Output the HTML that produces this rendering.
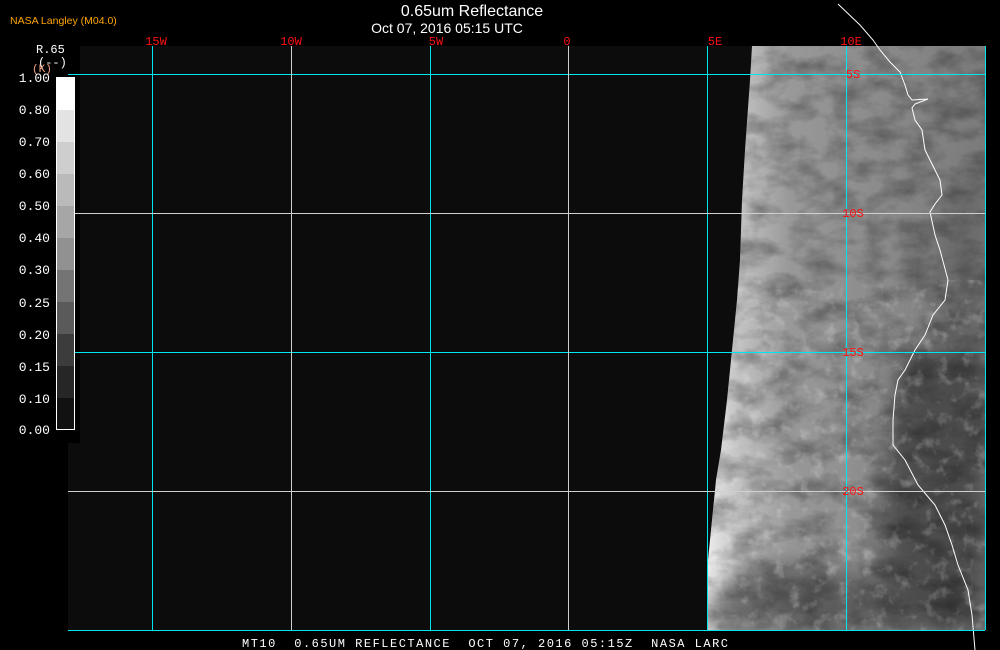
<!DOCTYPE html>
<html><head><meta charset="utf-8"><style>
html,body{margin:0;padding:0;background:#000;width:1000px;height:650px;overflow:hidden}
svg{display:block}
</style></head><body>
<svg width="1000" height="650" viewBox="0 0 1000 650" xmlns="http://www.w3.org/2000/svg">
<defs>
<filter id="noise" x="0" y="0" width="100%" height="100%">
<feTurbulence type="fractalNoise" baseFrequency="0.03 0.05" numOctaves="4" seed="7"/>
<feColorMatrix type="matrix" values="0 0 0 0 0  0 0 0 0 0  0 0 0 0 0  0 0 0 -1.6 1.0"/>
</filter>
<filter id="noise2" x="0" y="0" width="100%" height="100%">
<feTurbulence type="fractalNoise" baseFrequency="0.08" numOctaves="3" seed="3"/>
<feColorMatrix type="matrix" values="0 0 0 0 1  0 0 0 0 1  0 0 0 0 1  0 0 0 -2.4 1.1"/>
</filter>
<filter id="blur"><feGaussianBlur stdDeviation="12"/></filter>
<linearGradient id="edge" x1="0" x2="1" y1="0" y2="0">
<stop offset="0" stop-color="#f0f0f0"/>
<stop offset="0.1" stop-color="#c8c8c8"/>
<stop offset="0.3" stop-color="#999"/>
<stop offset="0.6" stop-color="#8c8c8c"/>
<stop offset="1" stop-color="#7a7a7a"/>
</linearGradient>
<clipPath id="cl"><polygon points="752,46 750,80 745,150 742,200 740,260 737,300 733,340 727,400 721,450 716,480 712,520 708,560 708,630 985,630 985,46"/></clipPath>
</defs>
<rect width="1000" height="650" fill="#000"/>
<rect x="80" y="46" width="905" height="584" fill="#0c0c0c"/>
<rect x="68" y="443" width="20" height="187" fill="#0c0c0c"/>
<g clip-path="url(#cl)">
<rect x="705" y="46" width="280" height="584" fill="url(#edge)"/>
<g filter="url(#blur)">
<polygon points="900,360 985,330 985,630 900,630 880,520" fill="#3e3e3e" opacity="0.8"/>
<polygon points="760,560 900,580 985,610 985,630 708,630 708,600" fill="#4a4a4a" opacity="0.7"/>
<polygon points="940,200 985,180 985,330 930,330" fill="#5a5a5a" opacity="0.6"/>
</g>
<rect x="705" y="46" width="280" height="584" filter="url(#noise)" opacity="0.4"/>
<rect x="705" y="280" width="280" height="350" filter="url(#noise2)" opacity="0.3"/>
</g>
<polyline fill="none" stroke="#fff" stroke-width="1" points="838,4 860,25 873,40 880,50 890,62 900,72 905,85 908,95 912,100 928,99 915,104 912,108 915,120 922,130 925,150 935,170 940,180 942,195 935,204 930,212 935,235 940,250 948,280 945,300 933,315 925,335 915,350 905,370 898,380 895,395 893,420 893,445 905,460 918,485 935,505 945,525 952,545 958,565 968,590 972,615 975,650"/>
<g stroke="#00e5ee" stroke-width="1" shape-rendering="crispEdges">
<line x1="68" y1="74.5" x2="985" y2="74.5"/>
<line x1="68" y1="352.5" x2="985" y2="352.5"/>
<line x1="68" y1="630.5" x2="985" y2="630.5"/>
<line x1="152.5" y1="46" x2="152.5" y2="630"/>
<line x1="430.5" y1="46" x2="430.5" y2="630"/>
<line x1="707.5" y1="46" x2="707.5" y2="630"/>
<line x1="846.5" y1="46" x2="846.5" y2="630"/>
<line x1="985.5" y1="46" x2="985.5" y2="630"/>
</g>
<g stroke="#cfcfcf" stroke-width="1" shape-rendering="crispEdges">
<line x1="68" y1="213.5" x2="985" y2="213.5"/>
<line x1="68" y1="491.5" x2="985" y2="491.5"/>
<line x1="291.5" y1="46" x2="291.5" y2="630"/>
<line x1="568.5" y1="46" x2="568.5" y2="630"/>
</g>
<g shape-rendering="crispEdges">
<rect x="56" y="77" width="19" height="33" fill="#fff"/>
<rect x="56" y="110" width="19" height="32" fill="#e3e3e3"/>
<rect x="56" y="142" width="19" height="32" fill="#cecece"/>
<rect x="56" y="174" width="19" height="32" fill="#bababa"/>
<rect x="56" y="206" width="19" height="32" fill="#a6a6a6"/>
<rect x="56" y="238" width="19" height="32" fill="#919191"/>
<rect x="56" y="270" width="19" height="32" fill="#747474"/>
<rect x="56" y="302" width="19" height="32" fill="#5a5a5a"/>
<rect x="56" y="334" width="19" height="32" fill="#3c3c3c"/>
<rect x="56" y="366" width="19" height="32" fill="#262626"/>
<rect x="56" y="398" width="19" height="32" fill="#111"/>
<rect x="56.5" y="77.5" width="18" height="352" fill="none" stroke="#fff" stroke-width="1"/>
</g>
<g font-family="Liberation Mono, monospace" font-size="13" fill="#fff" text-anchor="end">
<text x="50" y="82">1.00</text>
<text x="50" y="114">0.80</text>
<text x="50" y="146">0.70</text>
<text x="50" y="178">0.60</text>
<text x="50" y="210">0.50</text>
<text x="50" y="242">0.40</text>
<text x="50" y="274">0.30</text>
<text x="50" y="307">0.25</text>
<text x="50" y="339">0.20</text>
<text x="50" y="371">0.15</text>
<text x="50" y="403">0.10</text>
<text x="50" y="434">0.00</text>
</g>
<g font-family="Liberation Mono, monospace" font-size="12" fill="#fff">
<text x="36" y="53">R.65</text>
<text x="38" y="66">(--)</text>
<text x="32" y="72" fill="#f0a080" font-size="11">(K)</text>
</g>
<text x="10" y="24" font-family="Liberation Sans, sans-serif" font-size="10.5" fill="#ffa500">NASA Langley (M04.0)</text>
<text x="472" y="16" font-family="Liberation Sans, sans-serif" font-size="16" fill="#fff" text-anchor="middle">0.65um Reflectance</text>
<text x="447" y="33" font-family="Liberation Sans, sans-serif" font-size="14" fill="#fff" text-anchor="middle">Oct 07, 2016 05:15 UTC</text>
<g font-family="Liberation Mono, monospace" font-size="12" fill="#ff1010" text-anchor="middle">
<text x="156" y="45">15W</text>
<text x="291" y="45">10W</text>
<text x="436" y="45">5W</text>
<text x="567" y="45">0</text>
<text x="715" y="45">5E</text>
<text x="851" y="45">10E</text>
<text x="853" y="78">5S</text>
<text x="853" y="217">10S</text>
<text x="853" y="356">15S</text>
<text x="853" y="495">20S</text>
</g>
<text x="242" y="647" xml:space="preserve" font-family="Liberation Mono, monospace" font-size="12" fill="#fff" textLength="486" lengthAdjust="spacing">MT10  0.65UM REFLECTANCE  OCT 07, 2016 05:15Z  NASA LARC</text>
</svg>
</body></html>
